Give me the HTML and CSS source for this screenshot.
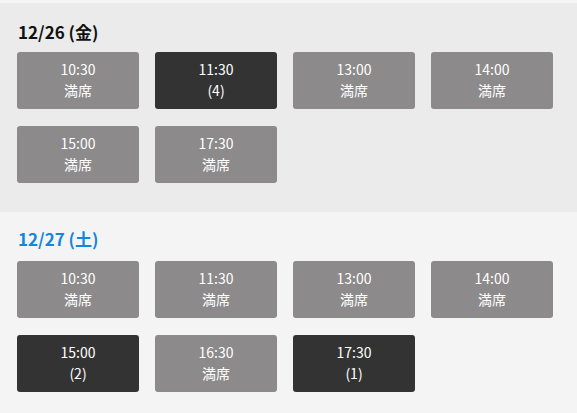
FILE: index.html
```html
<!DOCTYPE html>
<html lang="ja">
<head>
<meta charset="utf-8">
<title>予約</title>
<link rel="stylesheet" href="styles.css">
</head>
<body>
<div class="page">
  <section class="day day-gray">
    <h2 class="date">12/26 (金)</h2>
    <div class="slots">
      <div class="slot full">10:30<br>満席</div>
      <div class="slot open">11:30<br>(4)</div>
      <div class="slot full">13:00<br>満席</div>
      <div class="slot full">14:00<br>満席</div>
      <div class="slot full">15:00<br>満席</div>
      <div class="slot full">17:30<br>満席</div>
    </div>
  </section>
  <section class="day day-light">
    <h2 class="date date-sat">12/27 (土)</h2>
    <div class="slots">
      <div class="slot full">10:30<br>満席</div>
      <div class="slot full">11:30<br>満席</div>
      <div class="slot full">13:00<br>満席</div>
      <div class="slot full">14:00<br>満席</div>
      <div class="slot open">15:00<br>(2)</div>
      <div class="slot full">16:30<br>満席</div>
      <div class="slot open">17:30<br>(1)</div>
    </div>
  </section>
</div>
</body>
</html>
```
FILE: styles.css
```css
html, body {
  margin: 0;
  padding: 0;
}
body {
  background: #f4f4f4;
  font-family: "Noto Sans CJK JP", "Noto Sans", sans-serif;
  color: #111;
}
.page {
  padding-top: 3px;
}
.day {
  padding: 0 17px;
}
.day-gray {
  background: #ebebeb;
  padding-top: 17px;
  padding-bottom: 29px;
}
.day-light {
  padding-top: 15px;
  padding-bottom: 20px;
}
.date {
  margin: 0 0 8px 1px;
  font-size: 17px;
  line-height: 24px;
  font-weight: 700;
  color: #111;
}
.date-sat {
  color: #1586d8;
  margin-bottom: 10px;
}
.slots {
  display: grid;
  grid-template-columns: repeat(4, 122px);
  column-gap: 16px;
  row-gap: 17px;
}
.slot {
  height: 57px;
  box-sizing: border-box;
  padding-top: 7px;
  border-radius: 3px;
  color: #fff;
  font-size: 14px;
  line-height: 21px;
  text-align: center;
}
.full {
  background: #8c8a8a;
}
.open {
  background: #333333;
}
```
